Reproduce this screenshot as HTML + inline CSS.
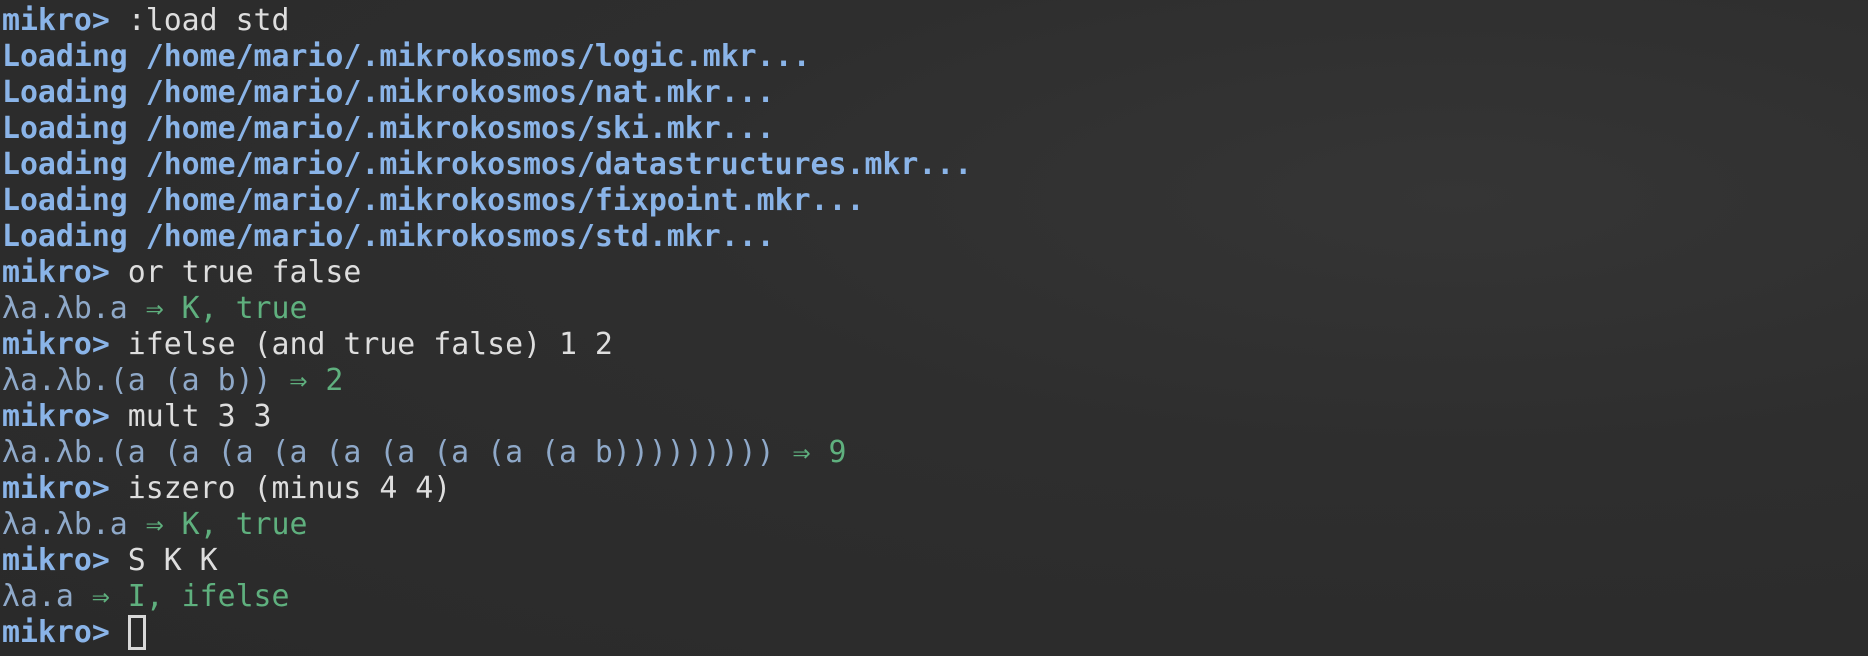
<!DOCTYPE html>
<html><head><meta charset="utf-8"><style>
html,body{margin:0;padding:0;}
body{width:1868px;height:656px;overflow:hidden;background:radial-gradient(ellipse at 78% 30%,#353535 0%,#2e2e2e 40%,#2a2a2a 100%);}
pre{margin:0;padding:3px 0 0 2px;font-family:"DejaVu Sans Mono","Liberation Mono",monospace;font-size:29.85px;line-height:36px;color:#dedede;}
.p{color:#8ab4e8;font-weight:bold;}
.l{color:#8fa9c9;}
.g{color:#5fb07e;}
.c{display:inline-block;width:18px;height:35px;border:3px solid #d8d8d8;box-sizing:border-box;vertical-align:-8px;}
</style></head><body><pre><span class="p">mikro&gt;</span> :load std
<span class="p">Loading /home/mario/.mikrokosmos/logic.mkr...</span>
<span class="p">Loading /home/mario/.mikrokosmos/nat.mkr...</span>
<span class="p">Loading /home/mario/.mikrokosmos/ski.mkr...</span>
<span class="p">Loading /home/mario/.mikrokosmos/datastructures.mkr...</span>
<span class="p">Loading /home/mario/.mikrokosmos/fixpoint.mkr...</span>
<span class="p">Loading /home/mario/.mikrokosmos/std.mkr...</span>
<span class="p">mikro&gt;</span> or true false
<span class="l">λa.λb.a</span> <span class="g">⇒ K, true</span>
<span class="p">mikro&gt;</span> ifelse (and true false) 1 2
<span class="l">λa.λb.(a (a b))</span> <span class="g">⇒ 2</span>
<span class="p">mikro&gt;</span> mult 3 3
<span class="l">λa.λb.(a (a (a (a (a (a (a (a (a b)))))))))</span> <span class="g">⇒ 9</span>
<span class="p">mikro&gt;</span> iszero (minus 4 4)
<span class="l">λa.λb.a</span> <span class="g">⇒ K, true</span>
<span class="p">mikro&gt;</span> S K K
<span class="l">λa.a</span> <span class="g">⇒ I, ifelse</span>
<span class="p">mikro&gt;</span> <span class="c"></span></pre></body></html>
